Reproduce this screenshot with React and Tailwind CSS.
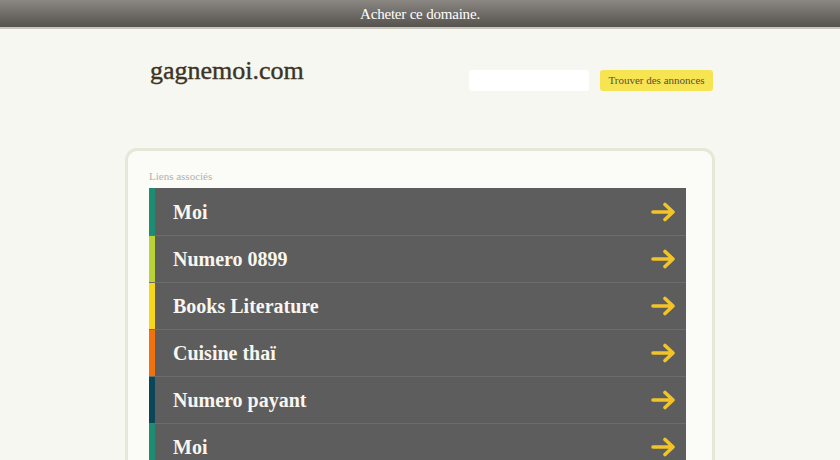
import React from 'react'

const links = [
  { label: 'Moi', color: 'bg-[#1e8c72]' },
  { label: 'Numero 0899', color: 'bg-[#b9d334]' },
  { label: 'Books Literature', color: 'bg-[#f7d816]' },
  { label: 'Cuisine thaï', color: 'bg-[#f0720f]' },
  { label: 'Numero payant', color: 'bg-[#0b4658]' },
  { label: 'Moi', color: 'bg-[#1e8c72]' },
]

function Arrow() {
  return (
    <svg width="26" height="20" viewBox="0 0 26 20" fill="none">
      <path d="M2 10h20M14 2.5l8 7.5-8 7.5" stroke="#f2c428" strokeWidth="3.6" strokeLinecap="round" strokeLinejoin="round" />
    </svg>
  )
}

export default function App() {
  return (
    <div className="bg-[#f6f7f0] font-['Liberation_Serif',serif] overflow-hidden h-[460px]">
      <div className="h-[29px] bg-gradient-to-b from-[#8b8782] to-[#56534f] border-b-2 border-[#c9c7bd] flex items-center justify-center">
        <span className="text-[15px] text-white tracking-[-0.2px] mt-[2px]">Acheter ce domaine.</span>
      </div>

      <div className="w-[590px] mx-auto">
        <div className="flex items-start justify-between pt-[27px] h-[119px]">
          <h1 className="ml-[25px] text-[26px] leading-[30px] text-[#3d3425] [-webkit-text-stroke:0.4px_#3d3425]">gagnemoi.com</h1>
          <div className="flex items-center gap-[11px] mt-[14px] mr-[2px]">
            <input className="w-[120px] h-[21px] bg-white rounded-[3px] outline-none" />
            <button className="h-[21px] w-[113px] bg-[#f6e453] rounded-[3px] text-[11px] text-[#5a5036]">Trouver des annonces</button>
          </div>
        </div>

        <div className="border-[3px] border-[#e6e7d7] rounded-[12px] bg-[#fbfbf7] pl-[21px] pr-[26px] pt-[18px]">
          <div className="text-[11px] text-[#b3b3a6] leading-[14px] mb-[5px]">Liens associés</div>
          <div className="flex flex-col">
            {links.map((link, i) => (
              <div key={i} className="flex h-[47px] bg-[#5d5d5d] border-t border-[#6c6c6c] first:border-t-0">
                <div className={`w-[6px] ${link.color}`} />
                <div className="flex-1 flex items-center justify-between pl-[18px] pr-[9px]">
                  <span className="text-[20px] font-bold text-[#f8f6ef]">{link.label}</span>
                  <Arrow />
                </div>
              </div>
            ))}
          </div>
        </div>
      </div>
    </div>
  )
}
